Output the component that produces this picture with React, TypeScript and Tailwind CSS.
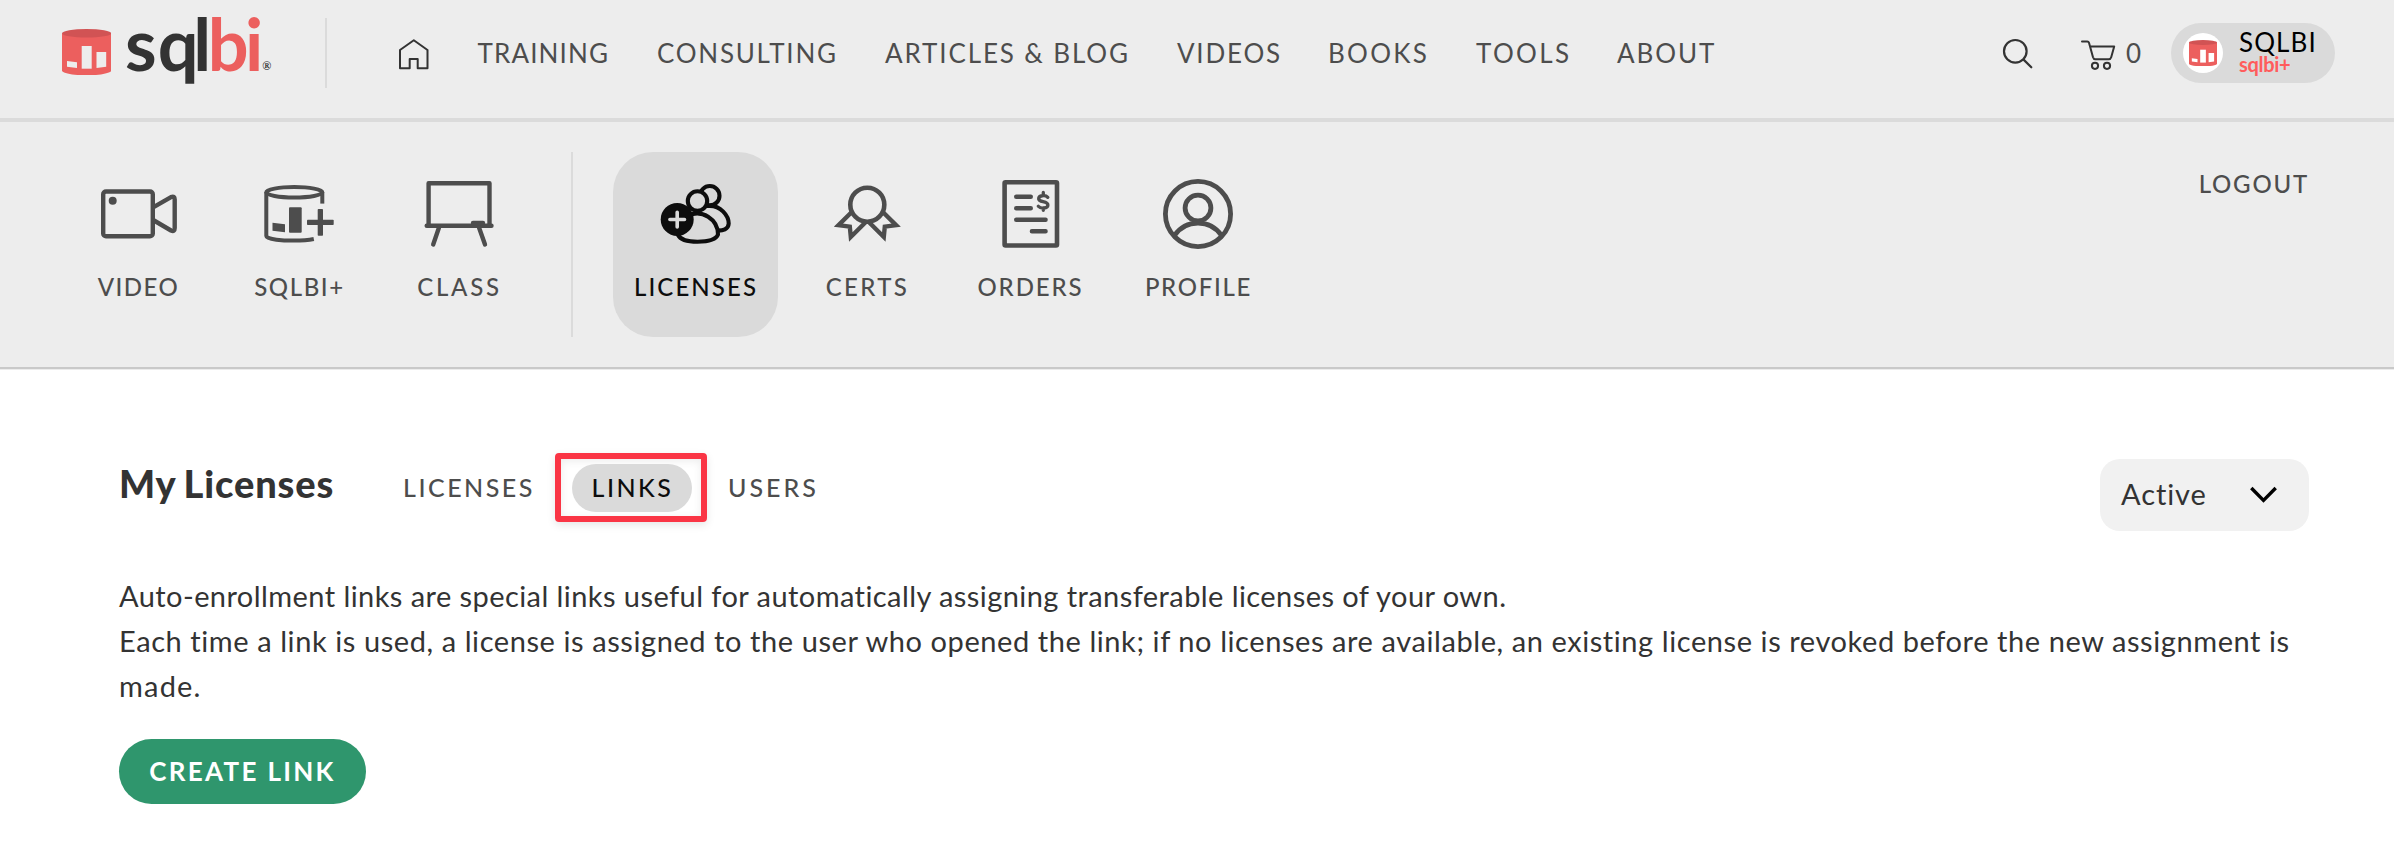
import React from "react";

function Barrel({ className, bar }: { className: string; bar: string }) {
  return (
    <svg viewBox="62 29 49.3 46.5" className={className} aria-hidden="true">
      <path d="M62 33.2V71C67 76.8 106.300 76.8 111.300 71V33.2Z" fill="#ec5f5e" />
      <ellipse cx="86.650" cy="33.300" rx="24.650" ry="4.300" fill="#d15354" />
      <path d="M67 61L77 62.200V67.900L67 66.800Z" fill={bar} />
      <path d="M81.700 46H91.700V68.700H81.700Z" fill={bar} />
      <path d="M96.500 52H106.200V66.800L96.500 67.900Z" fill={bar} />
    </svg>
  );
}

function LogoText() {
  return (
    <svg
      viewBox="124 10 150 84"
      className="ml-[12px] h-[84px] w-[150px] shrink-0 overflow-visible"
      fontFamily="Lato, sans-serif"
      fontWeight="700"
      fontSize="72"
    >
      <text y="71.300" fill="#333333">
        <tspan x="126">s</tspan>
        <tspan x="158.700">q</tspan>
        <tspan x="194.300">l</tspan>
      </text>
      <text y="71.300" fill="#ec5f5e">
        <tspan x="208.800">b</tspan>
        <tspan x="246">i</tspan>
      </text>
      <text x="263.300" y="70" fontFamily="Liberation Serif, serif" fontSize="12" fontWeight="700" fill="#333333">
        ®
      </text>
    </svg>
  );
}

function Tile({
  label,
  view,
  className,
  textClass,
  children,
}: {
  label: string;
  view: string;
  className: string;
  textClass: string;
  children: React.ReactNode;
}) {
  return (
    <a className={`flex h-[185px] shrink-0 flex-col items-center pt-[20px] ${className}`}>
      <svg
        viewBox={view}
        className="h-[80px] w-[100px] shrink-0"
        fill="none"
        stroke="currentColor"
        strokeWidth="4.400"
        strokeLinecap="round"
        strokeLinejoin="round"
      >
        {children}
      </svg>
      <span className={`mt-[20px] pl-px text-[24px] leading-[30px] font-medium whitespace-nowrap ${textClass}`}>
        {label}
      </span>
    </a>
  );
}

export default function App() {
  return (
    <div className="min-h-[855px] w-[2394px] bg-white font-[Lato,sans-serif] text-[#4d4d4d]">
      <header className="flex h-[122px] items-start border-b-4 border-[#dbdbdb] bg-[#ededed] pl-[62px]">
        <div className="flex h-[104px] items-center">
          <Barrel className="h-[46.5px] w-[49.3px] shrink-0" bar="#ededed" />
          <LogoText />
        </div>
        <div className="mt-[18px] ml-[52px] h-[70px] w-[2px] bg-[#dbdbdb]" />
        <svg
          viewBox="398 38 32 32"
          className="mt-[38px] ml-[70.7px] h-8 w-8 shrink-0"
          fill="none"
          stroke="#333333"
          strokeWidth="2"
          strokeLinejoin="round"
        >
          <path d="M400 50L413.800 40.200L427.500 50V68.200H417.700V59H409.700V68.200H400Z" />
        </svg>
        <nav className="ml-[47.5px] flex text-[26px] leading-[106px] whitespace-nowrap">
          <a className="w-[179.5px] tracking-[1.142px]">TRAINING</a>
          <a className="w-[228px] tracking-[1.746px]">CONSULTING</a>
          <a className="w-[292px] tracking-[1.88px]">ARTICLES &amp; BLOG</a>
          <a className="w-[151px] tracking-[1.784px]">VIDEOS</a>
          <a className="w-[148px] tracking-[2.3px]">BOOKS</a>
          <a className="w-[141px] tracking-[2.375px]">TOOLS</a>
          <a className="w-[100px] tracking-[1.913px]">ABOUT</a>
        </nav>
        <svg
          viewBox="2000 36 36 36"
          className="mt-[36px] ml-[283px] h-9 w-9 shrink-0"
          fill="none"
          stroke="#333333"
          strokeWidth="2.200"
          strokeLinecap="round"
        >
          <circle cx="2015.300" cy="51.300" r="11.300" />
          <path d="M2023.600 59.600L2031.300 67.300" />
        </svg>
        <svg
          viewBox="2080 36 36 36"
          className="mt-[36px] ml-[44px] h-9 w-9 shrink-0"
          fill="none"
          stroke="#333333"
          strokeWidth="2"
          strokeLinecap="round"
          strokeLinejoin="round"
        >
          <path d="M2082 41.500H2087.300Q2088.600 41.500 2089 42.800L2093 57.300Q2093.600 59.300 2095.300 59.300H2108.700Q2110.600 59.300 2111.200 57.300L2114.200 46.500H2090.200" />
          <circle cx="2095" cy="65.800" r="3.100" />
          <circle cx="2107" cy="65.800" r="3.100" />
        </svg>
        <span className="ml-[10px] w-[16px] text-[26px] leading-[106px]">0</span>
        <div className="mt-[23px] ml-[29px] flex h-[60px] w-[164px] shrink-0 items-center rounded-[30px] bg-[#dadada] pl-[12px]">
          <div className="flex h-[40px] w-[40px] shrink-0 items-center justify-center rounded-full bg-white">
            <Barrel className="h-[26.5px] w-[28px]" bar="#ffffff" />
          </div>
          <div className="ml-[16px] flex flex-col">
            <span className="h-[24px] text-[26px] leading-[26px] tracking-[1.1px] text-black">SQLBI</span>
            <span className="h-[24px] text-[20px] leading-[22px] font-bold tracking-[-0.3px] text-[#ff5c5c]">
              sqlbi+
            </span>
          </div>
        </div>
      </header>

      <section className="flex h-[247px] items-start border-b-2 border-[#c9c9c9] bg-[#ededed] pt-[30px] pl-[78px] shadow-[0_1px_0_#ececec]">
        <Tile label="VIDEO" view="88 172 100 80" className="w-[120px]" textClass="tracking-[1.5px]">
          <rect x="103.200" y="191.500" width="49.600" height="44.700" rx="2.800" />
          <circle cx="112.700" cy="200.800" r="4" fill="currentColor" stroke="none" />
          <path d="M154 206.800L171 197.100Q174.700 195.400 174.700 199.500V228Q174.700 232.200 171 230.500L154 220.500" />
        </Tile>
        <Tile label="SQLBI+" view="249 172 100 80" className="ml-[41px] w-[120px]" textClass="tracking-[1.6px]">
          <g strokeWidth="4" strokeLinecap="butt">
            <ellipse cx="294.300" cy="192.300" rx="28" ry="5.200" />
            <path d="M266.300 192V236C266.300 239.500 284 240.700 294 240.600C302 240.600 308 240.200 313.800 239" />
            <path d="M322.300 192V203.600" />
          </g>
          <g fill="currentColor" stroke="none">
            <path d="M272.500 222.800L285 224.300V232.300L272.500 230.800Z" />
            <rect x="289" y="207.300" width="12.700" height="25.400" rx="1" />
            <rect x="317.700" y="209" width="5.300" height="26.700" rx="0.800" />
            <rect x="307" y="219.700" width="26.700" height="5.300" rx="0.800" />
          </g>
        </Tile>
        <Tile label="CLASS" view="409 172 100 80" className="ml-[40px] w-[120px]" textClass="tracking-[2.7px]">
          <path d="M428.600 225.600V183.300H489.500V225.600" />
          <path d="M426.700 225.700H491.500" />
          <path d="M473 223H483" />
          <path d="M439 227.500L433.200 244.500M479 227.500L485 244.500" />
        </Tile>
        <div className="ml-[52px] h-[185px] w-[2px] bg-[#dbdbdb]" />
        <Tile
          label="LICENSES"
          view="645.5 172 100 80"
          className="ml-[40px] w-[165px] rounded-[40px] bg-[#dadada] text-[#0d0d0d]"
          textClass="tracking-[2.1px]"
        >
          <g strokeWidth="4.100">
            <circle cx="709.300" cy="195.700" r="9.700" />
            <path d="M707 206C720 204.500 728.200 216 728.200 223.500C728 229.500 722 230.800 717 230.600" />
            <path
              d="M688 215.500C701 209 717.500 219 717.500 234.500C715.500 239.500 708 241.700 697 241.700C687 241.700 680 240 677.500 235"
              fill="#dadada"
            />
            <circle cx="697" cy="201" r="9.700" fill="#dadada" />
          </g>
          <circle cx="676.700" cy="219.400" r="16.500" fill="currentColor" stroke="none" />
          <path d="M669.400 219.500H684M676.700 212.200V226.900" stroke="#dadada" strokeWidth="3.600" />
        </Tile>
        <Tile label="CERTS" view="817 172 100 80" className="ml-[29px] w-[120px]" textClass="tracking-[2.4px]">
          <circle cx="867.300" cy="204.700" r="17" strokeWidth="4.600" />
          <g strokeLinejoin="miter" strokeLinecap="butt">
            <path d="M852 211.800L838.500 225.100L849.800 226.600L850.800 237L866.300 221.500" />
            <path d="M882.600 211.800L896.100 225.100L884.800 226.600L883.800 237L868.300 221.500" />
          </g>
        </Tile>
        <Tile label="ORDERS" view="980 172 100 80" className="ml-[33px] w-[140px]" textClass="tracking-[1.9px]">
          <rect x="1004.600" y="182.300" width="52.400" height="63.200" rx="1" strokeWidth="4.600" />
          <path d="M1016.200 196.700H1030.800M1016.200 208.200H1030.800M1016.200 219.700H1045.600M1031.900 231.200H1045.600" />
          <path
            d="M1047.800 197.300C1045.500 194.700 1038.500 195.200 1038.700 199C1039 202.500 1047.900 200.800 1047.900 205C1047.900 208.800 1040.500 208.800 1038.300 206.200M1043.300 192.500V195.500M1043.300 208V210.300"
            strokeWidth="3.300"
          />
        </Tile>
        <Tile label="PROFILE" view="1148 172 100 80" className="ml-[28px] w-[140px]" textClass="tracking-[1.7px]">
          <g strokeWidth="4.800">
            <circle cx="1198" cy="214" r="32.600" />
            <circle cx="1198" cy="208" r="12.900" />
            <path d="M1174.500 235.500A28.600 28.600 0 0 1 1221.500 235.500" />
          </g>
        </Tile>
        <a className="mt-[17px] mr-[85px] ml-auto text-[24px] leading-[30px] font-medium tracking-[1.8px]">LOGOUT</a>
      </section>

      <main className="pr-[85px] pl-[119px]">
        <div className="flex h-[204px] items-start">
          <h1 className="mt-[92px] w-[284px] text-[38px] leading-[44px] font-black tracking-[0.85px] [word-spacing:-2px] whitespace-nowrap text-[#333333]">
            My Licenses
          </h1>
          <a className="mt-[96px] w-[152px] text-[25px] leading-[45px] font-medium tracking-[2.5px]">LICENSES</a>
          <div className="mt-[84px] flex h-[69px] w-[152px] shrink-0 items-center rounded-[4px] border-6 border-[#fa3545] pl-[11px] shadow-[0_3px_8px_rgba(0,0,0,0.1),inset_0_2px_8px_rgba(0,0,0,0.08)]">
            <a className="h-[48px] w-[120px] rounded-[24px] bg-[#dadada] pl-[19.5px] text-[25px] leading-[47px] font-medium tracking-[2.5px] text-[#0d0d0d]">
              LINKS
            </a>
          </div>
          <a className="mt-[96px] ml-[21px] text-[25px] leading-[45px] font-medium tracking-[3px]">USERS</a>
          <div className="mt-[90px] ml-auto flex h-[72px] w-[209px] items-center rounded-[20px] bg-[#f1f1f1] pl-[21px]">
            <span className="w-[129px] pb-[3px] text-[29px] leading-[40px] tracking-[0.9px] text-[#333333]">Active</span>
            <svg viewBox="0 0 27 18" className="h-[18px] w-[27px]" fill="none" stroke="#000000" strokeWidth="3.400">
              <path d="M1.300 2L13.500 14.400L25.700 2" />
            </svg>
          </div>
        </div>
        <div className="text-[29px] leading-[45px] whitespace-nowrap text-[#333333]">
          <p className="tracking-[0.43px]">
            Auto-enrollment links are special links useful for automatically assigning transferable licenses of your own.
          </p>
          <p className="tracking-[0.58px]">
            Each time a link is used, a license is assigned to the user who opened the link; if no licenses are
            available, an existing license is revoked before the new assignment is
            <br />
            <span className="tracking-[1.2px]">made.</span>
          </p>
        </div>
        <button className="mt-[31px] block h-[65px] w-[247px] rounded-full bg-[#2f966d] text-[26px] leading-[65px] font-bold tracking-[2.3px] whitespace-nowrap text-white">
          CREATE LINK
        </button>
      </main>
    </div>
  );
}
